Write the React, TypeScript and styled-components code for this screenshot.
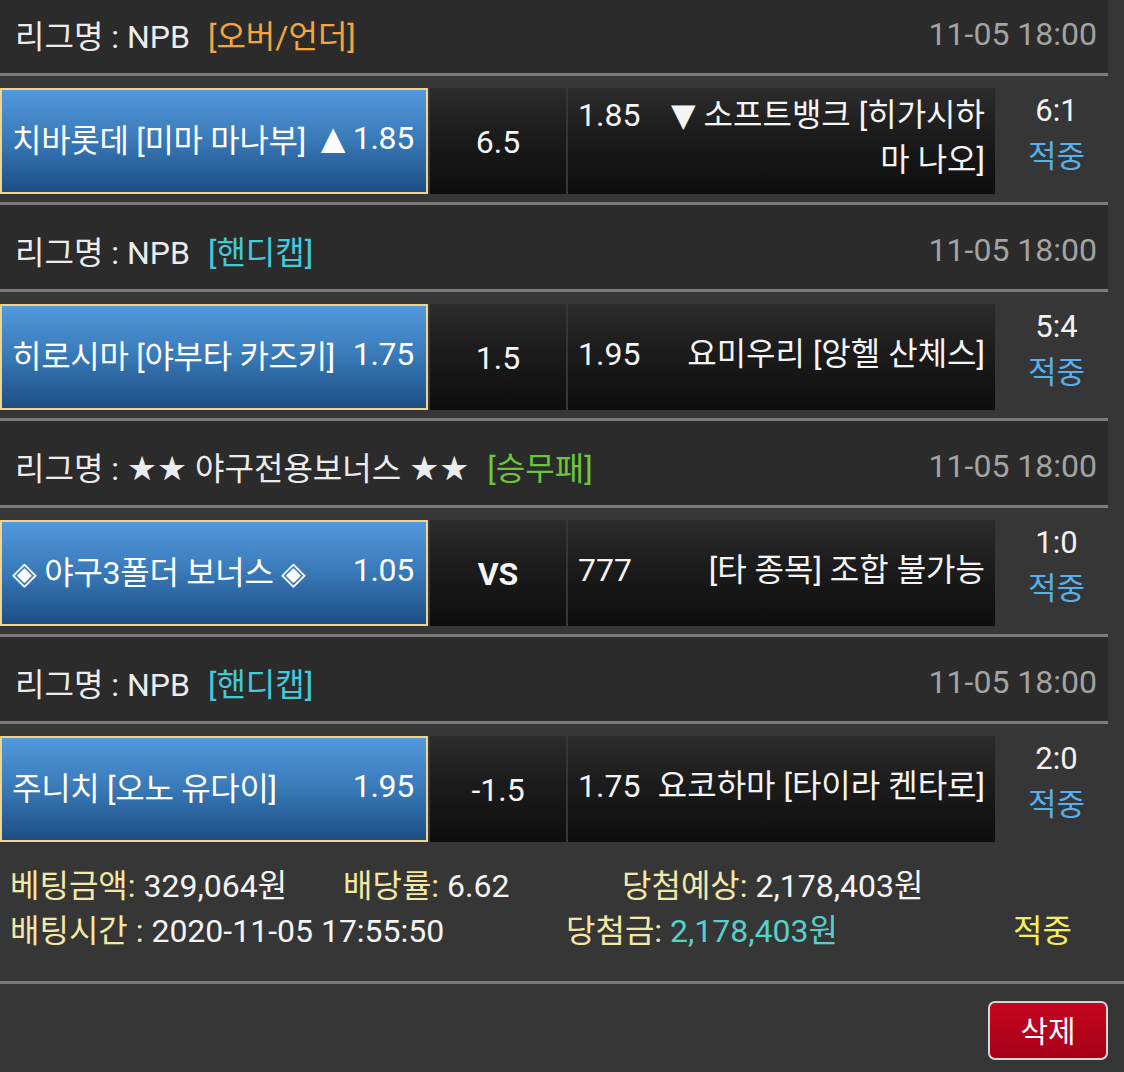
import React from 'react';
import styled, { createGlobalStyle } from 'styled-components';

const Global = createGlobalStyle`
  html, body { margin: 0; padding: 0; background: #363636; }
  body { font-family: Roboto, "Noto Sans CJK KR", sans-serif; overflow: hidden; }
  * { box-sizing: border-box; }
`;

const Page = styled.div`
  width: 1124px;
  height: 1072px;
  overflow: hidden;
  background: #363636;
  color: #f2f2f2;
  font-size: 32px;
`;

const List = styled.div`
  width: 1108px;
  margin-top: -11px;
`;

const Header = styled.div`
  height: 87px;
  padding: 8px 11px 2px 15px;
  display: flex;
  align-items: center;
  justify-content: space-between;
  background: #2b2b2b;
  border-bottom: 3px solid #7a7a7a;
  white-space: nowrap;
`;

const League = styled.div`
  color: #ececec;
`;

const Symbol = styled.span<{ $size?: number }>`
  font-family: "DejaVu Sans", sans-serif;
  font-size: ${(p) => p.$size ?? 1}em;
`;

const Tag = styled.span<{ $color: string }>`
  color: ${(p) => p.$color};
  margin-left: 18px;
`;

const DateText = styled.div`
  color: #a3a3a3;
`;

const Row = styled.div<{ $last?: boolean }>`
  height: ${(p) => (p.$last ? 126 : 129)}px;
  padding: 12px 0 9px;
  display: grid;
  grid-template-columns: 428px 136px 427px 1fr;
  column-gap: 2px;
  border-bottom: ${(p) => (p.$last ? 'none' : '3px solid #7a7a7a')};
`;

const HomeCell = styled.div`
  border: 2px solid #f1d48d;
  background: linear-gradient(180deg, #5299dc 0%, #3878b7 50%, #1c4d84 100%);
  display: flex;
  align-items: center;
  justify-content: space-between;
  gap: 8px;
  padding: 0 12px 6px 10px;
  white-space: nowrap;
  letter-spacing: -0.3px;
  color: #fff;
`;

const DarkCell = styled.div`
  background: linear-gradient(180deg, #2c2c2c 0%, #1b1b1b 45%, #0e0e0e 100%);
`;

const LineCell = styled(DarkCell)<{ $bold?: boolean }>`
  display: flex;
  align-items: center;
  justify-content: center;
  padding-top: 2px;
  font-weight: ${(p) => (p.$bold ? 700 : 400)};
  color: #f4f4f4;
`;

const AwayCell = styled(DarkCell)`
  display: flex;
  align-items: center;
  padding: 0 10px 6px;
  line-height: 45px;
  color: #f4f4f4;
`;

const AwayBody = styled.div`
  flex: 1;
  display: flex;
  align-items: baseline;
`;

const AwayOdds = styled.div`
  flex: none;
`;

const AwayName = styled.div`
  flex: 1;
  margin-left: 10px;
  text-align: right;
`;

const ScoreCol = styled.div`
  display: flex;
  flex-direction: column;
  align-items: center;
  justify-content: center;
  padding: 0 0 14px 8px;
  font-size: 31px;
  line-height: 46px;
`;

const Score = styled.div`
  color: #f2f2f2;
`;

const Result = styled.div<{ $color: string }>`
  color: ${(p) => p.$color};
`;

const Summary = styled.div`
  height: 134px;
  padding: 14px 0 0 10px;
  border-bottom: 3px solid #7a7a7a;
  line-height: 45px;
`;

const SummaryLine = styled.div`
  display: flex;
  white-space: nowrap;
`;

const Item = styled.div<{ $w?: number }>`
  width: ${(p) => (p.$w ? `${p.$w}px` : 'auto')};
  flex: none;
`;

const Label = styled.span`
  color: #f3e8a6;
`;

const Value = styled.span<{ $color?: string }>`
  color: ${(p) => p.$color || '#f4f4f4'};
`;

const Actions = styled.div`
  display: flex;
  justify-content: flex-end;
  padding: 17px 16px 0 0;
`;

const DeleteButton = styled.button`
  width: 120px;
  height: 59px;
  border: 2px solid #d6d6d6;
  border-radius: 7px;
  background: linear-gradient(180deg, #c4061f 0%, #a8001a 100%);
  color: #fff;
  font-family: inherit;
  font-size: 30px;
  padding: 0 0 4px;
  cursor: pointer;
`;

type Bet = {
  tag: string;
  tagColor: string;
  league: React.ReactNode;
  home: string;
  homeArrow?: string;
  homeOdds: string;
  line: string;
  bold?: boolean;
  awayOdds: string;
  awayArrow?: string;
  away: string;
  score: string;
};

const bets: Bet[] = [
  {
    league: 'NPB',
    tag: '[오버/언더]',
    tagColor: '#f5a540',
    home: '치바롯데 [미마 마나부]',
    homeArrow: '▲',
    homeOdds: '1.85',
    line: '6.5',
    awayOdds: '1.85',
    awayArrow: '▼',
    away: '소프트뱅크 [히가시하마 나오]',
    score: '6:1',
  },
  {
    league: 'NPB',
    tag: '[핸디캡]',
    tagColor: '#45c9dc',
    home: '히로시마 [야부타 카즈키]',
    homeOdds: '1.75',
    line: '1.5',
    awayOdds: '1.95',
    away: '요미우리 [앙헬 산체스]',
    score: '5:4',
  },
  {
    league: (
      <>
        <Symbol $size={1.05}>★★</Symbol> 야구전용보너스 <Symbol $size={1.05}>★★</Symbol>
      </>
    ),
    tag: '[승무패]',
    tagColor: '#6cc63c',
    home: '◈ 야구3폴더 보너스 ◈',
    homeOdds: '1.05',
    line: 'VS',
    bold: true,
    awayOdds: '777',
    away: '[타 종목] 조합 불가능',
    score: '1:0',
  },
  {
    league: 'NPB',
    tag: '[핸디캡]',
    tagColor: '#45c9dc',
    home: '주니치 [오노 유다이]',
    homeOdds: '1.95',
    line: '-1.5',
    awayOdds: '1.75',
    away: '요코하마 [타이라 켄타로]',
    score: '2:0',
  },
];

export default function App() {
  return (
    <Page>
      <Global />
      <List>
        {bets.map((b, i) => (
          <React.Fragment key={i}>
            <Header>
              <League>
                리그명 : {b.league}
                <Tag $color={b.tagColor}>{b.tag}</Tag>
              </League>
              <DateText>11-05 18:00</DateText>
            </Header>
            <Row $last={i === bets.length - 1}>
              <HomeCell>
                <span>{b.home}</span>
                <span>
                  {b.homeArrow && <Symbol>{b.homeArrow}</Symbol>}
                  {b.homeArrow ? ' ' : ''}
                  {b.homeOdds}
                </span>
              </HomeCell>
              <LineCell $bold={b.bold}>{b.line}</LineCell>
              <AwayCell>
                <AwayBody>
                  <AwayOdds>{b.awayOdds}</AwayOdds>
                  <AwayName>
                    {b.awayArrow && <Symbol>{b.awayArrow}</Symbol>}
                    {b.awayArrow ? ' ' : ''}
                    {b.away}
                  </AwayName>
                </AwayBody>
              </AwayCell>
              <ScoreCol>
                <Score>{b.score}</Score>
                <Result $color="#5aaeea">적중</Result>
              </ScoreCol>
            </Row>
          </React.Fragment>
        ))}
      </List>
      <Summary>
        <SummaryLine>
          <Item $w={333}>
            <Label>베팅금액: </Label>
            <Value>329,064원</Value>
          </Item>
          <Item $w={279}>
            <Label>배당률: </Label>
            <Value>6.62</Value>
          </Item>
          <Item>
            <Label>당첨예상: </Label>
            <Value>2,178,403원</Value>
          </Item>
        </SummaryLine>
        <SummaryLine>
          <Item $w={556}>
            <Label>배팅시간 : </Label>
            <Value>2020-11-05 17:55:50</Value>
          </Item>
          <Item $w={447}>
            <Label>당첨금: </Label>
            <Value $color="#56d0c9">2,178,403원</Value>
          </Item>
          <Item>
            <Value $color="#f4ee5c">적중</Value>
          </Item>
        </SummaryLine>
      </Summary>
      <Actions>
        <DeleteButton>삭제</DeleteButton>
      </Actions>
    </Page>
  );
}
